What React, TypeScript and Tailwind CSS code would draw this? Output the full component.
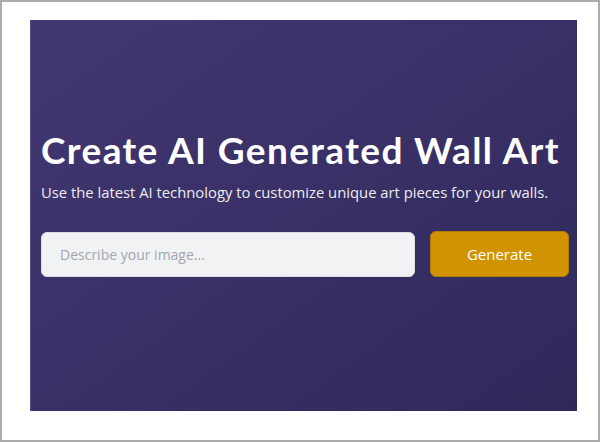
export default function App() {
  return (
    <div className="w-[600px] h-[443px] bg-white">
      <div className="w-[600px] h-[442px] border-2 border-[#ababab] bg-white pt-[18px] pl-[28px]">
        <div
          className="w-[547px] h-[391px] bg-gradient-to-br from-[#433772] to-[#2f295a] border-l border-[#5a5088] pl-[10px] pr-[8px] pt-[108px]"
          style={{ fontFamily: '"Open Sans", sans-serif' }}
        >
          <h1
            className="text-white font-bold text-[37px] leading-[44px] tracking-[1.4px] whitespace-nowrap"
            style={{ fontFamily: '"Lato", sans-serif' }}
          >
            Create AI Generated Wall Art
          </h1>
          <p className="text-[#ececf2] text-[14.8px] leading-[20px] mt-[10px] whitespace-nowrap">
            Use the latest AI technology to customize unique art pieces for your walls.
          </p>
          <div className="flex items-center gap-[15px] mt-[29px]">
            <div className="w-[374px] h-[45px] rounded-[6px] bg-[#f1f2f4] border border-[#dcdde2] flex items-center pl-[18px]">
              <span className="text-[#a4a6ad] text-[14px]">Describe your image...</span>
            </div>
            <button className="w-[139px] h-[46px] rounded-[6px] bg-[#d19300] border border-[#b07c08] text-white text-[15px] flex items-center justify-center">
              Generate
            </button>
          </div>
        </div>
      </div>
    </div>
  );
}
